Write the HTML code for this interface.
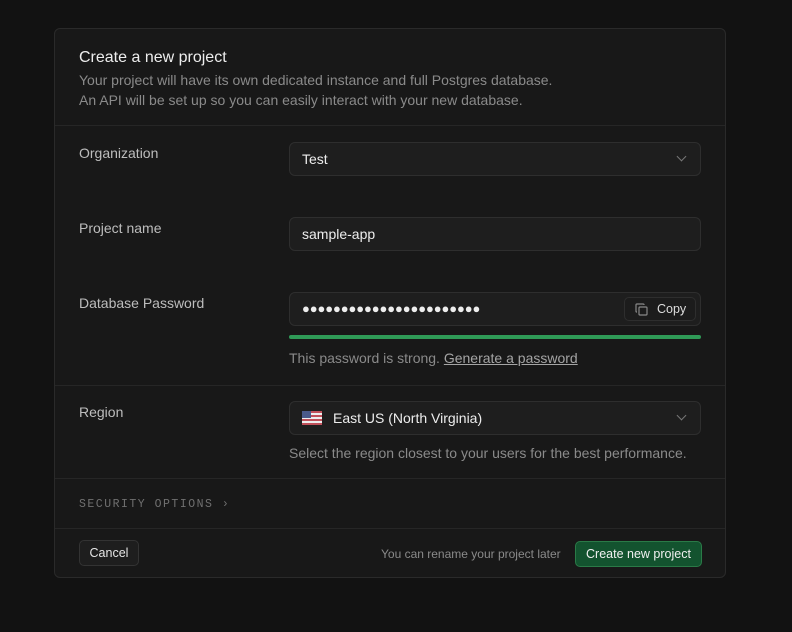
<!DOCTYPE html>
<html><head><style>
*{box-sizing:border-box;margin:0;padding:0}
body{width:792px;height:632px;background:#121212;font-family:"Liberation Sans",sans-serif;position:relative;overflow:hidden;color:#ededed}
.card{position:absolute;left:54px;top:28px;width:672px;height:550px;background:#181818;border:1px solid #2a2a2a;border-radius:6px}
.a{position:absolute}
.hr{position:absolute;left:0;width:670px;height:1px;background:#262626}
.t{font-size:14px;color:#bdbdbd}
.in{position:absolute;left:234px;width:412px;height:34px;background:#1e1e1e;border:1px solid #2e2e2e;border-radius:6px;font-size:14px;color:#ededed;padding:0 12px;line-height:32px}
.muted{font-size:14px;color:#8a8a8a}
.chev{position:absolute;right:15px;top:11px;width:7px;height:7px;border-right:1.3px solid #777;border-bottom:1.3px solid #777;transform:rotate(45deg)}
</style></head><body>
<div class="card">
<div class="a" style="left:24px;top:20px;font-size:16px;color:#ededed">Create a new project</div>
<div class="a muted" style="left:24px;top:41px;line-height:20px">Your project will have its own dedicated instance and full Postgres database.<br>An API will be set up so you can easily interact with your new database.</div>
<div class="hr" style="top:96px"></div>
<div class="a t" style="left:24px;top:116px">Organization</div>
<div class="in" style="top:113px">Test<div class="chev" style="top:10px"></div></div>
<div class="a t" style="left:24px;top:191px">Project name</div>
<div class="in" style="top:188px">sample-app</div>
<div class="a t" style="left:24px;top:266px">Database Password</div>
<div class="in" style="top:263px;letter-spacing:-0.1px;font-size:13px">●●●●●●●●●●●●●●●●●●●●●●●
<div class="a" style="right:4px;top:4px;width:72px;height:24px;border:1px solid #2e2e2e;border-radius:5px;background:#1c1c1c;font-size:12.5px;letter-spacing:0;line-height:22px;color:#ddd;padding-left:32px">Copy
<svg class="a" style="left:10px;top:5px" width="13" height="13" viewBox="0 0 13 13" fill="none" stroke="#888" stroke-width="1.2"><rect x="4" y="4" width="8" height="8" rx="1"/><path d="M9 2V1.5A.8.8 0 0 0 8.2 1H1.8A.8.8 0 0 0 1 1.8V8.2A.8.8 0 0 0 1.8 9H2"/></svg></div></div>
<div class="a" style="left:234px;top:306px;width:412px;height:4px;border-radius:2px;background:#2f9a57"></div>
<div class="a muted" style="left:234px;top:321px">This password is strong. <span style="color:#a5a5a5;text-decoration:underline">Generate a password</span></div>
<div class="hr" style="top:356px"></div>
<div class="a t" style="left:24px;top:375px">Region</div>
<div class="in" style="top:372px;padding-left:43px">East US (North Virginia)
<svg class="a" style="left:12px;top:9px" width="20" height="14" viewBox="0 0 20 14"><rect width="20" height="14" fill="#eee"/><g fill="#c0505a"><rect y="0" width="20" height="2"/><rect y="4" width="20" height="2"/><rect y="8" width="20" height="2"/><rect y="12" width="20" height="2"/></g><rect width="9" height="7" fill="#4a5a8a"/></svg>
<div class="chev" style="top:10px"></div></div>
<div class="a muted" style="left:234px;top:416px">Select the region closest to your users for the best performance.</div>
<div class="hr" style="top:449px"></div>
<div class="a" style="left:24px;top:469px;font-family:'Liberation Mono',monospace;font-size:11.5px;letter-spacing:1.5px;color:#707070">SECURITY OPTIONS ›</div>
<div class="hr" style="top:499px"></div>
<div class="a" style="left:24px;top:511px;width:60px;height:26px;border:1px solid #333;border-radius:5px;background:#1e1e1e;font-size:12.5px;line-height:24px;text-align:center;color:#e5e5e5">Cancel</div>
<div class="a" style="left:326px;top:518px;font-size:12px;color:#8a8a8a">You can rename your project later</div>
<div class="a" style="left:520px;top:512px;width:127px;height:26px;border:1px solid #2a7a47;border-radius:5px;background:#13532f;font-size:12.5px;line-height:24px;text-align:center;color:#f0f0f0">Create new project</div>
</div>
</body></html>
